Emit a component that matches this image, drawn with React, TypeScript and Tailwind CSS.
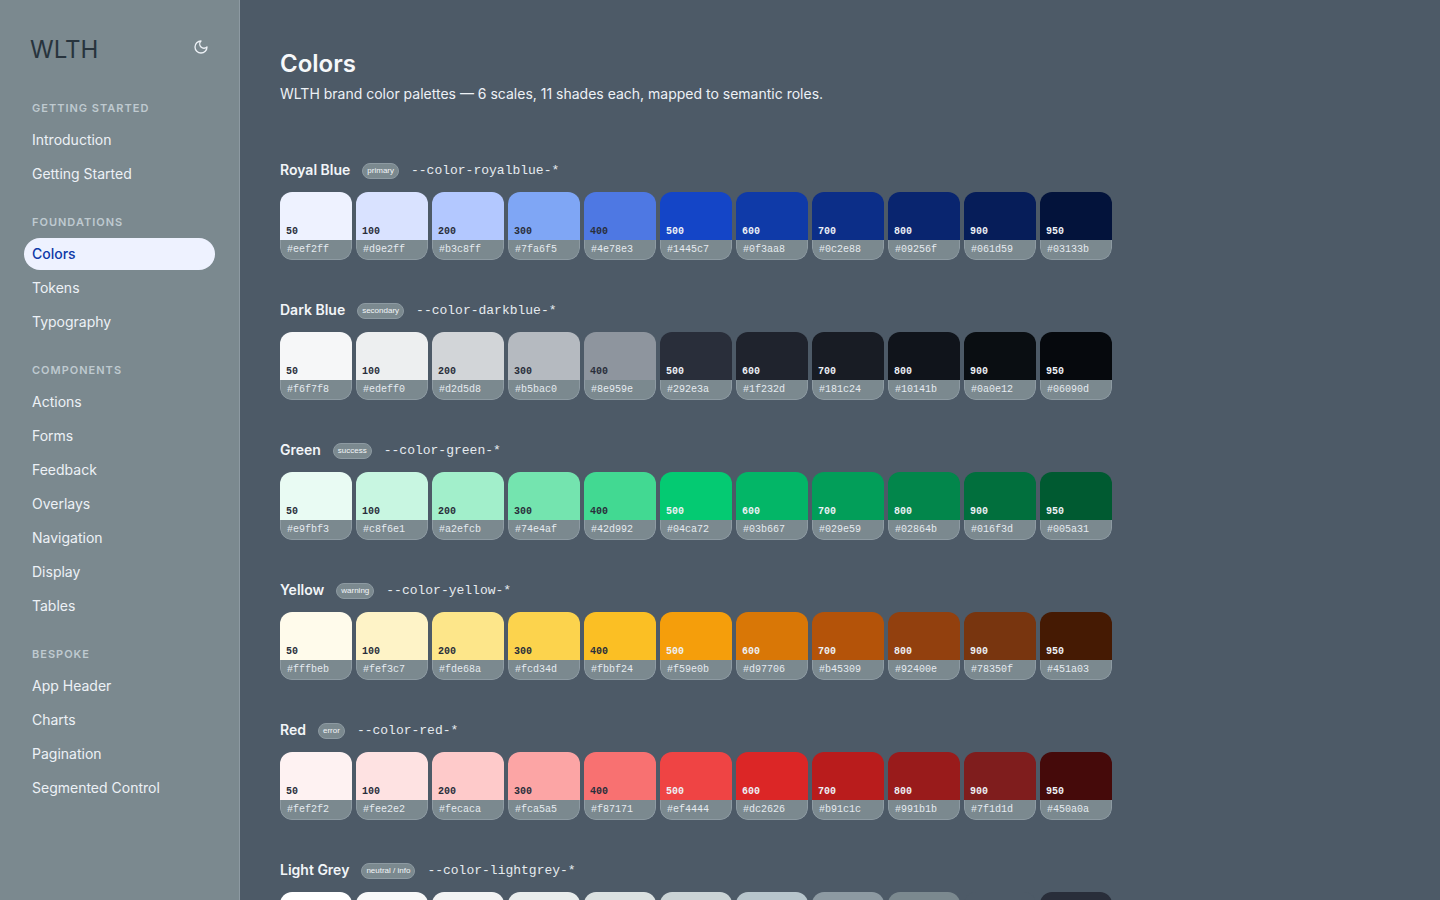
import React, { useState } from 'react';

interface NavSection {
  title: string;
  items: string[];
}

interface Palette {
  name: string;
  role: string;
  token: string;
  shades: string[];
}

const STEPS = [50, 100, 200, 300, 400, 500, 600, 700, 800, 900, 950];

const NAV: NavSection[] = [
  { title: 'Getting Started', items: ['Introduction', 'Getting Started'] },
  { title: 'Foundations', items: ['Colors', 'Tokens', 'Typography'] },
  {
    title: 'Components',
    items: ['Actions', 'Forms', 'Feedback', 'Overlays', 'Navigation', 'Display', 'Tables'],
  },
  { title: 'Bespoke', items: ['App Header', 'Charts', 'Pagination', 'Segmented Control'] },
];

const PALETTES: Palette[] = [
  {
    name: 'Royal Blue',
    role: 'primary',
    token: 'royalblue',
    shades: ['#eef2ff', '#d9e2ff', '#b3c8ff', '#7fa6f5', '#4e78e3', '#1445c7', '#0f3aa8', '#0c2e88', '#09256f', '#061d59', '#03133b'],
  },
  {
    name: 'Dark Blue',
    role: 'secondary',
    token: 'darkblue',
    shades: ['#f6f7f8', '#edeff0', '#d2d5d8', '#b5bac0', '#8e959e', '#292e3a', '#1f232d', '#181c24', '#10141b', '#0a0e12', '#06090d'],
  },
  {
    name: 'Green',
    role: 'success',
    token: 'green',
    shades: ['#e9fbf3', '#c8f6e1', '#a2efcb', '#74e4af', '#42d992', '#04ca72', '#03b667', '#029e59', '#02864b', '#016f3d', '#005a31'],
  },
  {
    name: 'Yellow',
    role: 'warning',
    token: 'yellow',
    shades: ['#fffbeb', '#fef3c7', '#fde68a', '#fcd34d', '#fbbf24', '#f59e0b', '#d97706', '#b45309', '#92400e', '#78350f', '#451a03'],
  },
  {
    name: 'Red',
    role: 'error',
    token: 'red',
    shades: ['#fef2f2', '#fee2e2', '#fecaca', '#fca5a5', '#f87171', '#ef4444', '#dc2626', '#b91c1c', '#991b1b', '#7f1d1d', '#450a0a'],
  },
  {
    name: 'Light Grey',
    role: 'neutral / info',
    token: 'lightgrey',
    shades: ['#ffffff', '#f8f9f9', '#f2f3f3', '#e9eded', '#dbe1e1', '#cbd4d6', '#b7c5cc', '#8d9aa2', '#7b898f', '#4d5a67', '#292e3a'],
  },
];

const Swatch: React.FC<{ step: number; hex: string }> = ({ step, hex }) => (
  <li className="w-[72px] overflow-hidden rounded-xl">
    <div className="flex h-12 items-end px-1.5 pb-0.5" style={{ backgroundColor: hex }}>
      <span
        className={`font-['Liberation_Mono',monospace] text-[10px] leading-3 font-bold ${
          step < 500 ? 'text-[#292e3a]' : 'text-[#edf1f6]'
        }`}
      >
        {step}
      </span>
    </div>
    <div className="h-5 rounded-b-xl border border-t-0 border-[#8d9aa2] bg-[#7b898f] px-1.5 font-['Liberation_Mono',monospace] text-[10px] leading-5 text-[#e6ebef]">
      {hex}
    </div>
  </li>
);

const PaletteRow: React.FC<{ palette: Palette }> = ({ palette }) => (
  <section>
    <div className="mb-3 flex h-5 items-center gap-3">
      <h2 className="text-sm leading-5 font-semibold text-[#f2f5f8]">{palette.name}</h2>
      <span className="mt-0.5 h-4 rounded-full border border-[#8d9aa2] bg-[#7b898f] px-1 font-['Liberation_Sans',sans-serif] text-[8px] leading-[14px] text-[#f2f5f8]">
        {palette.role}
      </span>
      <code className="mt-0.5 font-['Liberation_Mono',monospace] text-[13px] leading-5 text-[#e6ebef]">
        --color-{palette.token}-*
      </code>
    </div>
    <ul className="flex flex-wrap gap-1">
      {palette.shades.map((hex, i) => (
        <Swatch key={STEPS[i]} step={STEPS[i]} hex={hex} />
      ))}
    </ul>
  </section>
);

export default function App() {
  const [active, setActive] = useState('Colors');

  return (
    <div className="flex h-screen bg-[#4d5a67] font-['Inter',sans-serif] text-[#edf1f6]">
      {/* Sidebar */}
      <aside className="w-60 shrink-0 overflow-y-auto border-r border-[#8d9aa2] bg-[#7b898f] px-6 py-8 [scrollbar-width:none]">
        <div className="flex h-8 items-center justify-between px-1.5">
          <span className="mt-1 text-2xl leading-8 text-[#28343d]">WLTH</span>
          <button type="button" aria-label="Toggle theme" className="pb-0.5">
            <svg
              viewBox="0 0 24 24"
              className="size-4"
              fill="none"
              stroke="currentColor"
              strokeWidth="2"
              strokeLinecap="round"
              strokeLinejoin="round"
            >
              <path d="M12 3a6 6 0 0 0 9 9 9 9 0 1 1-9-9Z" />
            </svg>
          </button>
        </div>

        <nav className="mt-9 flex flex-col gap-6">
          {NAV.map(section => (
            <div key={section.title}>
              <h3 className="mb-2 px-2 text-[11px] leading-4 font-semibold tracking-[1px] text-[#bfcad0] uppercase">
                {section.title}
              </h3>
              <ul className="flex flex-col gap-0.5">
                {section.items.map(item => (
                  <li key={item}>
                    <a
                      href="#"
                      onClick={() => setActive(item)}
                      className={`block rounded-full px-2 py-1.5 text-sm leading-5 ${
                        item === active ? 'bg-[#eef2ff] font-medium text-[#0f3aa8]' : ''
                      }`}
                    >
                      {item}
                    </a>
                  </li>
                ))}
              </ul>
            </div>
          ))}
        </nav>
      </aside>

      {/* Content */}
      <main className="min-w-0 flex-1 overflow-y-auto px-10 py-12 [scrollbar-width:none]">
        <h1 className="text-2xl leading-8 font-semibold text-[#f6f8fa]">Colors</h1>
        <p className="mt-1 text-sm leading-5">
          WLTH brand color palettes — 6 scales, 11 shades each, mapped to semantic roles.
        </p>
        <div className="mt-14 flex flex-col gap-10">
          {PALETTES.map(palette => (
            <PaletteRow key={palette.token} palette={palette} />
          ))}
        </div>
      </main>
    </div>
  );
}
